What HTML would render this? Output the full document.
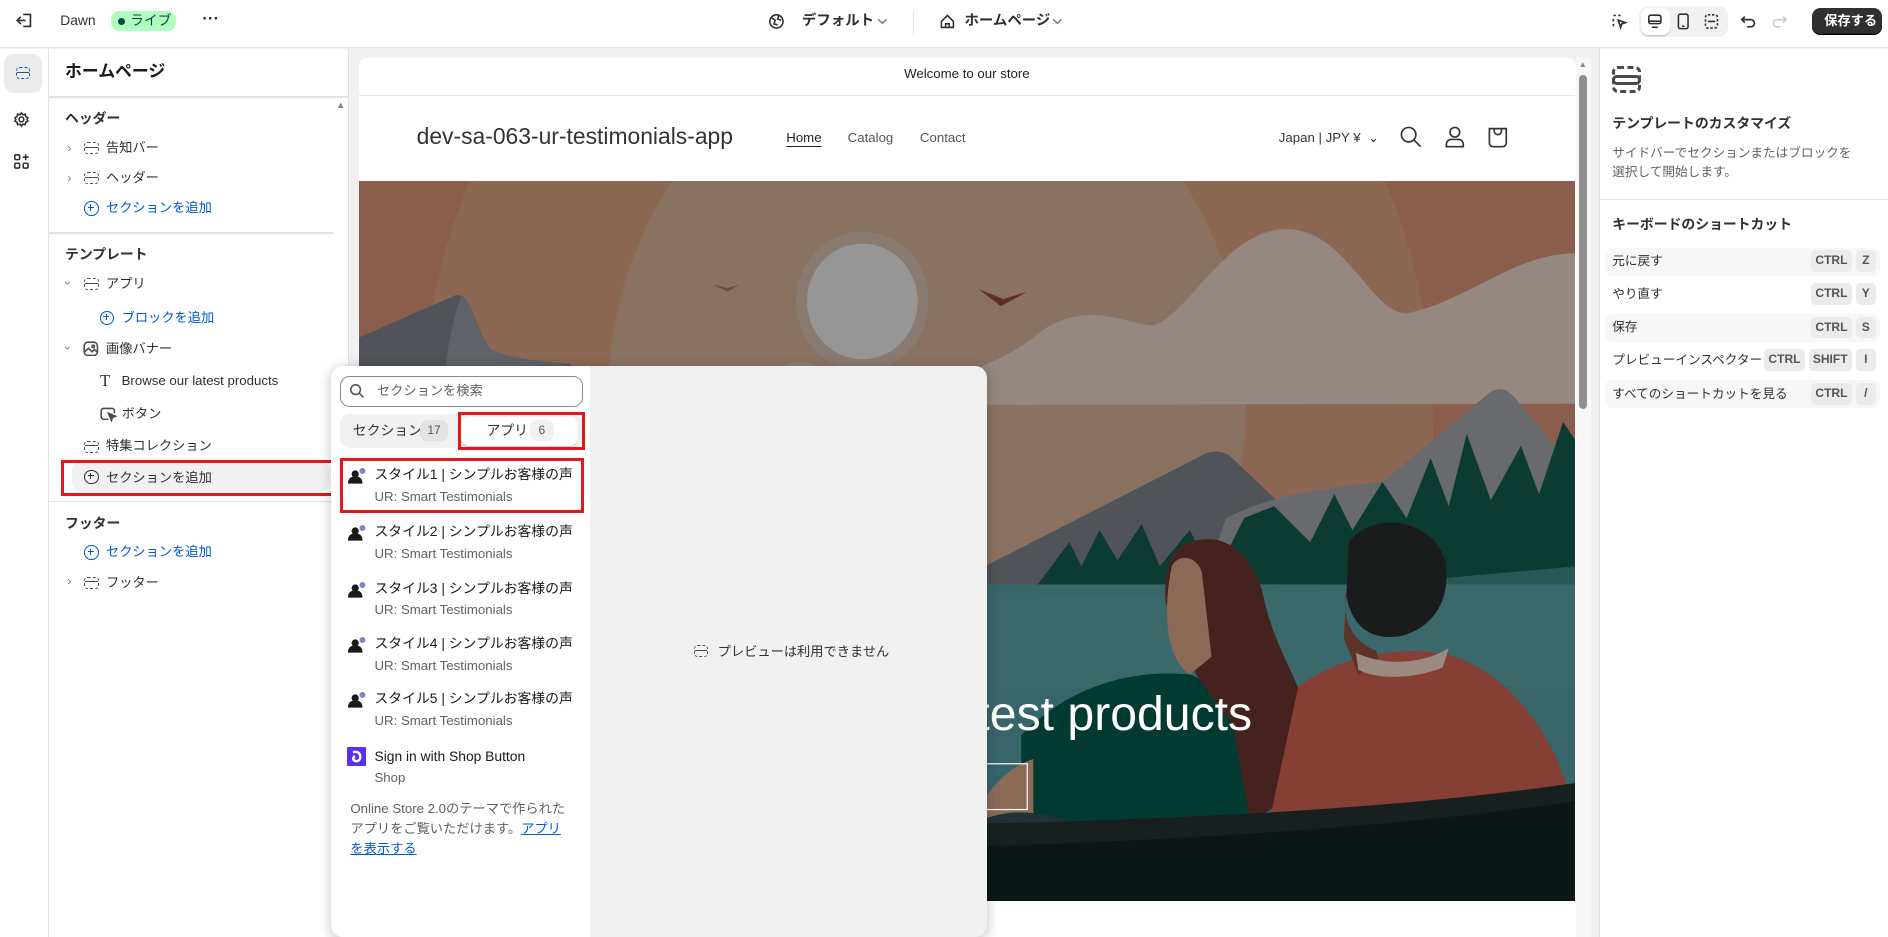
<!DOCTYPE html>
<html><head><meta charset="utf-8">
<style>
*{box-sizing:border-box;margin:0;padding:0}
html,body{width:1888px;height:937px;overflow:hidden;background:#fff}
#w{position:absolute;left:0;top:0;width:1568px;height:778px;zoom:1.2041;font-family:"Liberation Sans","Noto Sans CJK JP",sans-serif;color:#303030;font-size:11px;overflow:hidden;background:#f1f1f1}
.a{position:absolute}
.t{position:absolute;white-space:nowrap;line-height:1}
.blue{color:#005bd3}
.ico{position:absolute;width:12px;height:10px;border:1.5px dashed #4a4a4a;border-radius:3px}
.ico:after{content:"";position:absolute;left:0;right:0;top:3px;border-top:1.5px solid #4a4a4a}
.chev{position:absolute;font-size:10px;color:#777}
.plus{position:absolute;width:12px;height:12px;border:1.5px solid #005bd3;border-radius:50%}
.plus:before{content:"";position:absolute;left:2px;top:4px;width:5px;border-top:1.5px solid #005bd3}
.plus:after{content:"";position:absolute;left:4px;top:2px;height:5px;border-left:1.5px solid #005bd3}
.plus.d{border-color:#303030}.plus.d:before{border-color:#303030}.plus.d:after{border-color:#303030}
.key{position:absolute;background:#ebebeb;border-radius:4px;height:18px;font-size:10px;font-weight:bold;color:#555;text-align:center;line-height:18px}
.row{position:absolute;left:1333px;width:228px;height:23px;border-radius:6px}
</style></head><body><div id="w">

<!-- top bar -->
<div class="a" style="left:0;top:0;width:1568px;height:40px;background:#fff;border-bottom:1px solid #e3e3e3"></div>
<svg class="a" style="left:13px;top:10px" width="14" height="14" viewBox="0 0 14 14" fill="none" stroke="#303030" stroke-width="1.4"><path d="M6 2h6v10H6M1 7h7M4 4L1 7l3 3"/></svg>
<div class="t" style="left:50px;top:12px;font-size:11.5px">Dawn</div>
<div class="a" style="left:92px;top:9px;width:54px;height:17px;background:#affebf;border-radius:7px"></div>
<div class="a" style="left:98px;top:15px;width:6px;height:6px;background:#014b40;border-radius:50%"></div>
<div class="t" style="left:108px;top:12px;font-size:11.5px;color:#014b40">ライブ</div>
<div class="t" style="left:168px;top:9px;font-size:14px;font-weight:bold">···</div>
<svg class="a" style="left:638px;top:11px" width="14" height="14" viewBox="0 0 14 14" fill="none" stroke="#303030" stroke-width="1.3"><circle cx="7" cy="7" r="5.5"/><path d="M3 4l3 2-1 3 3 1M9 2l-1 3 3 1"/></svg>
<div class="t" style="left:666px;top:12px;font-size:12px;font-weight:bold">デフォルト</div>
<svg class="a" style="left:728px;top:15px" width="9" height="6" viewBox="0 0 9 6" fill="none" stroke="#777" stroke-width="1.2"><path d="M1 1l3.5 3.5L8 1"/></svg>
<div class="a" style="left:758px;top:9px;width:1px;height:20px;background:#e3e3e3"></div>
<svg class="a" style="left:780px;top:11px" width="14" height="14" viewBox="0 0 14 14" fill="none" stroke="#303030" stroke-width="1.3"><path d="M2 7l5-5 5 5v5H2zM5.5 12V9h3v3"/></svg>
<div class="t" style="left:801px;top:12px;font-size:12px;font-weight:bold">ホームページ</div>
<svg class="a" style="left:874px;top:15px" width="9" height="6" viewBox="0 0 9 6" fill="none" stroke="#777" stroke-width="1.2"><path d="M1 1l3.5 3.5L8 1"/></svg>
<svg class="a" style="left:1338px;top:11px" width="14" height="14" viewBox="0 0 14 14" fill="none" stroke="#303030" stroke-width="1.4"><path d="M2 2h2M6 2h2M2 5v2M2 9v2M6 6l6 2-3 1-1 3z"/></svg>
<div class="a" style="left:1361px;top:5px;width:74px;height:26px;background:#f1f1f1;border-radius:8px"></div>
<div class="a" style="left:1363px;top:7px;width:24px;height:22px;background:#fff;border-radius:6px;box-shadow:0 1px 1px rgba(0,0,0,.15)"></div>
<svg class="a" style="left:1368px;top:12px" width="13" height="12" viewBox="0 0 13 12" fill="none" stroke="#303030" stroke-width="1.3"><rect x="1.5" y="1" width="10" height="7" rx="1.5"/><path d="M4 11h5M1.5 6h10"/></svg>
<svg class="a" style="left:1392px;top:11px" width="12" height="14" viewBox="0 0 12 14" fill="none" stroke="#303030" stroke-width="1.3"><rect x="2" y="1" width="8" height="12" rx="1.5"/><path d="M5 11h2"/></svg>
<svg class="a" style="left:1414px;top:11px" width="14" height="14" viewBox="0 0 14 14" fill="none" stroke="#303030" stroke-width="1.3"><rect x="2" y="1.5" width="10" height="11" rx="2" stroke-dasharray="2 1.5"/><path d="M4 7h6"/></svg>
<svg class="a" style="left:1445px;top:11px" width="14" height="14" viewBox="0 0 14 14" fill="none" stroke="#303030" stroke-width="1.4"><path d="M4 3L1.5 5.5 4 8M1.5 5.5H9a3 3 0 010 6H6"/></svg>
<svg class="a" style="left:1471px;top:11px" width="14" height="14" viewBox="0 0 14 14" fill="none" stroke="#ccc" stroke-width="1.4"><path d="M10 3l2.5 2.5L10 8M12.5 5.5H5a3 3 0 000 6h3"/></svg>
<div class="a" style="left:1505px;top:7px;width:58px;height:22px;background:#303030;border-radius:7px;box-shadow:inset 0 -1px 0 #000"></div>
<div class="t" style="left:1515px;top:12px;font-size:11px;color:#fff;font-weight:bold">保存する</div>

<!-- left strip -->
<div class="a" style="left:0;top:41px;width:41px;height:737px;background:#fff;border-right:1px solid #e3e3e3"></div>
<div class="a" style="left:3px;top:45px;width:32px;height:32px;background:#ebebeb;border-radius:8px"></div>
<div class="ico" style="left:13px;top:56px;border-color:#005bd3"></div>
<svg class="a" style="left:11px;top:92px" width="14" height="14" viewBox="0 0 14 14" fill="none" stroke="#303030" stroke-width="1.3"><circle cx="7" cy="7" r="2"/><path d="M7 1.5l1.2 1.6 2-.5.4 2 1.8 1L11.6 7l.8 1.4-1.8 1-.4 2-2-.5L7 12.5l-1.2-1.6-2 .5-.4-2-1.8-1L2.4 7l-.8-1.4 1.8-1 .4-2 2 .5z"/></svg>
<svg class="a" style="left:11px;top:127px" width="14" height="14" viewBox="0 0 14 14" fill="none" stroke="#303030" stroke-width="1.3"><rect x="1.5" y="1.5" width="4" height="4" rx="1"/><rect x="1.5" y="8.5" width="4" height="4" rx="1"/><rect x="8.5" y="8.5" width="4" height="4" rx="1"/><path d="M10.5 1v5M8 3.5h5"/></svg>

<!-- left panel -->
<div class="a" style="left:41px;top:41px;width:249px;height:737px;background:#fff;border-right:1px solid #e3e3e3"></div>
<div class="t" style="left:54px;top:53px;font-size:14px;font-weight:bold;color:#1a1a1a">ホームページ</div>
<div class="a" style="left:41px;top:80px;width:249px;height:1px;background:#e3e3e3"></div>
<div class="t" style="left:279px;top:84px;font-size:8px;color:#888">▲</div>
<div class="t" style="left:54px;top:93px;font-size:11.5px;font-weight:bold">ヘッダー</div>
<div class="chev" style="left:56px;top:117px">›</div><div class="ico" style="left:70px;top:118px"></div><div class="t" style="left:88px;top:117px;font-size:11px">告知バー</div>
<div class="chev" style="left:56px;top:142px">›</div><div class="ico" style="left:70px;top:143px"></div><div class="t" style="left:88px;top:142px;font-size:11px">ヘッダー</div>
<div class="plus" style="left:70px;top:167px"></div><div class="t blue" style="left:88px;top:167px;font-size:11px">セクションを追加</div>
<div class="a" style="left:41px;top:193px;width:236px;height:1px;background:#e3e3e3"></div>
<div class="t" style="left:54px;top:206px;font-size:11.5px;font-weight:bold">テンプレート</div>
<div class="chev" style="left:55px;top:229px;transform:rotate(90deg)">›</div><div class="ico" style="left:70px;top:231px"></div><div class="t" style="left:88px;top:230px;font-size:11px">アプリ</div>
<div class="plus" style="left:83px;top:258px"></div><div class="t blue" style="left:101px;top:258px;font-size:11px">ブロックを追加</div>
<div class="chev" style="left:55px;top:283px;transform:rotate(90deg)">›</div>
<svg class="a" style="left:69px;top:283px" width="13" height="13" viewBox="0 0 13 13" fill="none" stroke="#4a4a4a" stroke-width="1.3"><rect x="1" y="1" width="11" height="11" rx="3"/><path d="M1.5 9l3-3 3 3 2-2 2 2"/><circle cx="8.5" cy="4.5" r="1"/></svg>
<div class="t" style="left:88px;top:284px;font-size:11px">画像バナー</div>
<div class="t" style="left:83px;top:310px;font-size:14px;font-family:'Liberation Serif',serif">T</div><div class="t" style="left:101px;top:311px;font-size:11px">Browse our latest products</div>
<svg class="a" style="left:83px;top:337px" width="14" height="14" viewBox="0 0 14 14" fill="none" stroke="#4a4a4a" stroke-width="1.3"><path d="M7 11H3a2 2 0 01-2-2V4a2 2 0 012-2h7a2 2 0 012 2v2"/><path d="M7 6l6 2.5-2.5 1-1 2.5z" fill="#4a4a4a"/></svg>
<div class="t" style="left:101px;top:338px;font-size:11px">ボタン</div>
<div class="ico" style="left:70px;top:366px"></div><div class="t" style="left:88px;top:365px;font-size:11px">特集コレクション</div>
<div class="a" style="left:60px;top:383px;width:213px;height:26px;background:#f1f1f1;border-radius:8px"></div>
<div class="a" style="left:51px;top:382px;width:226px;height:30px;border:2.5px solid #e8161a"></div>
<div class="plus d" style="left:70px;top:390px"></div><div class="t" style="left:88px;top:391px;font-size:11px">セクションを追加</div>
<div class="a" style="left:41px;top:416px;width:236px;height:1px;background:#e3e3e3"></div>
<div class="t" style="left:54px;top:429px;font-size:11.5px;font-weight:bold">フッター</div>
<div class="plus" style="left:70px;top:453px"></div><div class="t blue" style="left:88px;top:453px;font-size:11px">セクションを追加</div>
<div class="chev" style="left:56px;top:477px">›</div><div class="ico" style="left:70px;top:479px"></div><div class="t" style="left:88px;top:478px;font-size:11px">フッター</div>

<!-- preview frame -->
<div class="a" style="left:298px;top:48px;width:1011px;height:730px;background:#fff;border-radius:6px 6px 0 0"></div>
<div class="t" style="top:56px;text-align:center;font-size:11px;color:#222;left:298px;width:1010px">Welcome to our store</div>
<div class="a" style="left:298px;top:79px;width:1010px;height:1px;background:#e6e6e6"></div>
<div class="t" style="left:346px;top:104px;font-size:19px;color:#333">dev-sa-063-ur-testimonials-app</div>
<div class="t" style="left:653px;top:109px;font-size:11px;color:#222;text-decoration:underline;text-underline-offset:3px">Home</div>
<div class="t" style="left:704px;top:109px;font-size:11px;color:#555">Catalog</div>
<div class="t" style="left:764px;top:109px;font-size:11px;color:#555">Contact</div>
<div class="t" style="left:1062px;top:109px;font-size:11px;color:#333">Japan | JPY ¥ &nbsp;⌄</div>
<svg class="a" style="left:1162px;top:104px" width="20" height="20" viewBox="0 0 20 20" fill="none" stroke="#333" stroke-width="1.4"><circle cx="8" cy="8" r="6"/><path d="M12.5 12.5L18 18"/></svg>
<svg class="a" style="left:1199px;top:104px" width="18" height="20" viewBox="0 0 18 20" fill="none" stroke="#333" stroke-width="1.4"><circle cx="9" cy="6" r="4"/><path d="M2 18v-2a4 4 0 014-4h6a4 4 0 014 4v2z"/></svg>
<svg class="a" style="left:1235px;top:104px" width="18" height="20" viewBox="0 0 18 20" fill="none" stroke="#333" stroke-width="1.4"><path d="M2 3h14v12a3 3 0 01-3 3H5a3 3 0 01-3-3zM6 3v2a3 3 0 006 0V3"/></svg>

<!-- hero -->
<svg class="a" style="left:298px;top:150px" width="1010" height="598" viewBox="0 0 1010 598">
<rect width="1010" height="598" fill="#8b5d4c"/>
<ellipse cx="472" cy="200" rx="420" ry="470" fill="#8c6754"/>
<ellipse cx="472" cy="180" rx="265" ry="300" fill="#8a7262"/>
<ellipse cx="418" cy="100" rx="55" ry="58" fill="#8a7b70"/>
<ellipse cx="418" cy="100" rx="46" ry="48" fill="#969696"/>
<path d="M294 86l12 6 10-6-10 3z" fill="#6e4a40"/>
<path d="M515 90l18 14 22-12-20 6z" fill="#5e2e2a"/>
<path d="M550 135l10 5 12-5-11 2z" fill="#6e4a40"/>
<path d="M410 180 C470 170 520 160 560 130 C600 95 640 120 660 120 C690 110 720 40 770 40 C820 40 840 110 870 110 C920 100 960 60 1010 60 L1010 185 L410 186 Z" fill="#958880"/>
<path d="M330 185 C340 150 370 140 390 160 L400 186Z" fill="#8f8078"/>
<path d="M0 130 L80 95 C88 92 90 110 95 125 C110 150 140 150 175 152 L220 200 L0 210 Z" fill="#505357"/>
<path d="M85 95 C95 100 100 130 110 140 C130 150 160 148 180 155 L200 200 L70 210 C68 170 75 120 85 95Z" fill="#5f6266"/>
<path d="M500 330 L700 228 C710 222 720 225 725 230 L820 320 L500 340Z" fill="#505357"/>
<path d="M720 280 C760 260 800 255 850 250 L940 175 C950 170 955 175 960 180 L1010 240 L1010 340 L700 340Z" fill="#686a6e"/>
<path d="M560 340 L590 300 L600 320 L615 290 L630 315 L650 285 L665 320 L690 290 L710 330 L735 280 L760 270 L790 300 L810 260 L825 290 L850 250 L870 280 L890 230 L905 270 L920 210 L940 265 L965 220 L980 260 L1000 200 L1010 215 L1010 340 Z" fill="#0c3b31"/>
<rect x="0" y="335" width="1010" height="200" fill="#38656a"/>
<path d="M0 360 C200 350 400 355 600 345 C800 340 900 330 1010 320 L1010 420 L0 420Z" fill="#3c6a6c" opacity=".6"/>
<path d="M550 460 C590 420 640 405 690 410 C720 420 750 460 760 500 L740 560 L550 560Z" fill="#003a30"/>
<path d="M690 300 C720 290 740 310 750 340 C760 390 780 410 790 450 C800 490 770 520 740 530 L725 450 C700 420 680 390 670 350 C668 320 675 305 690 300Z" fill="#46221f"/>
<path d="M675 320 C680 310 695 310 700 325 L708 395 L690 410 C675 400 665 370 675 320Z" fill="#8b6a58"/>
<path d="M560 480 C530 490 510 520 500 560 L560 560Z" fill="#8b6a58"/>
<path d="M780 420 C820 390 880 385 910 395 C950 410 975 440 995 480 L1010 520 L1010 560 L750 560 Z" fill="#853f35"/>
<path d="M822 300 C840 275 890 278 902 315 C908 350 890 372 865 378 C840 382 825 370 820 345Z" fill="#1a1c1c"/>
<path d="M820 340 C815 370 830 385 845 390 L848 402 L830 410 L818 380Z" fill="#5c3428"/>
<path d="M828 392 C855 404 885 400 905 388 L900 404 C875 414 845 414 830 406Z" fill="#9a8a80"/>
<path d="M500 540 C530 520 560 520 600 535 L600 560 L480 560Z" fill="#1f3236"/>
<path d="M0 560 C300 540 700 555 1010 505 L1010 598 L0 598Z" fill="#0d1715"/>
<path d="M0 548 C300 530 700 545 1010 500 L1010 515 C700 560 300 555 0 565Z" fill="#17201f"/>
<text x="505" y="456" text-anchor="middle" font-family="Liberation Sans,sans-serif" font-size="40" fill="#fff">Browse our latest products</text>
<rect x="385" y="484" width="170" height="38" fill="none" stroke="#fff" stroke-width="1"/>
<text x="470" y="508" text-anchor="middle" font-family="Liberation Sans,sans-serif" font-size="12" fill="#fff">Shop all</text>
</svg>
<!-- scrollbar -->
<div class="a" style="left:1309px;top:48px;width:12px;height:730px;background:#f7f7f7"></div>
<div class="a" style="left:1311px;top:62px;width:7px;height:278px;background:#909090;border-radius:4px"></div>
<div class="t" style="left:1311px;top:50px;font-size:7px;color:#888">▲</div>

<!-- right panel -->
<div class="a" style="left:1328px;top:41px;width:240px;height:737px;background:#fff;border-left:1px solid #e3e3e3"></div>
<div class="a" style="left:1339px;top:55px;width:24px;height:22px;border:3px dashed #4a4a4a;border-radius:5px"></div>
<div class="a" style="left:1339px;top:62px;width:24px;height:9px;border:3px solid #4a4a4a;border-radius:4px"></div>
<div class="t" style="left:1339px;top:97px;font-size:11.5px;font-weight:bold">テンプレートのカスタマイズ</div>
<div class="t" style="left:1339px;top:122px;font-size:10.5px;color:#616161">サイドバーでセクションまたはブロックを</div>
<div class="t" style="left:1339px;top:138px;font-size:10.5px;color:#616161">選択して開始します。</div>
<div class="a" style="left:1329px;top:165px;width:239px;height:1px;background:#e3e3e3"></div>
<div class="t" style="left:1339px;top:181px;font-size:11.5px;font-weight:bold">キーボードのショートカット</div>
<div class="row" style="top:206px;background:#f7f7f7"></div>
<div class="row" style="top:261px;background:#f7f7f7"></div>
<div class="row" style="top:316px;background:#f7f7f7"></div>
<div class="t" style="left:1339px;top:212px;font-size:10.5px">元に戻す</div>
<div class="key" style="left:1504px;top:208px;width:34px">CTRL</div><div class="key" style="left:1541px;top:208px;width:17px">Z</div>
<div class="t" style="left:1339px;top:239px;font-size:10.5px">やり直す</div>
<div class="key" style="left:1504px;top:235px;width:34px">CTRL</div><div class="key" style="left:1541px;top:235px;width:17px">Y</div>
<div class="t" style="left:1339px;top:267px;font-size:10.5px">保存</div>
<div class="key" style="left:1504px;top:263px;width:34px">CTRL</div><div class="key" style="left:1541px;top:263px;width:17px">S</div>
<div class="t" style="left:1339px;top:294px;font-size:10.5px">プレビューインスペクター</div>
<div class="key" style="left:1465px;top:290px;width:34px">CTRL</div><div class="key" style="left:1502px;top:290px;width:36px">SHIFT</div><div class="key" style="left:1541px;top:290px;width:17px">I</div>
<div class="t" style="left:1339px;top:322px;font-size:10.5px">すべてのショートカットを見る</div>
<div class="key" style="left:1504px;top:318px;width:34px">CTRL</div><div class="key" style="left:1541px;top:318px;width:17px">/</div>

<!-- popup -->
<div class="a" style="left:275px;top:304px;width:545px;height:474px;background:#f1f1f1;border-radius:10px;box-shadow:0 2px 10px rgba(0,0,0,.25);overflow:hidden">
  <div class="a" style="left:0;top:0;width:215px;height:474px;background:#fff"></div>
</div>
<div class="a" style="left:282px;top:312px;width:202px;height:26px;border:1px solid #8a8a8a;border-radius:8px;background:#fff"></div>
<svg class="a" style="left:290px;top:318px" width="13" height="13" viewBox="0 0 13 13" fill="none" stroke="#555" stroke-width="1.3"><circle cx="5.5" cy="5.5" r="4"/><path d="M8.5 8.5L12 12"/></svg>
<div class="t" style="left:313px;top:319px;font-size:11px;color:#616161">セクションを検索</div>
<div class="a" style="left:282px;top:344px;width:202px;height:28px;background:#f1f1f1;border-radius:8px"></div>
<div class="t" style="left:293px;top:352px;font-size:11.5px">セクション</div>
<div class="a" style="left:349px;top:349px;width:23px;height:17px;background:#e3e3e3;border-radius:6px;font-size:10px;text-align:center;line-height:17px;color:#555">17</div>
<div class="a" style="left:383px;top:346px;width:97px;height:24px;background:#fff;border-radius:7px;box-shadow:0 1px 1px rgba(0,0,0,.15)"></div>
<div class="t" style="left:404px;top:352px;font-size:11.5px">アプリ</div>
<div class="a" style="left:440px;top:349px;width:20px;height:17px;background:#f1f1f1;border-radius:6px;font-size:10px;text-align:center;line-height:17px;color:#555">6</div>
<div class="a" style="left:380px;top:342px;width:106px;height:32px;border:2.5px solid #e8161a"></div>

<div class="a" style="left:282px;top:380px;width:203px;height:46px;border:2.5px solid #e8161a"></div>
<div class="t" style="left:311px;top:389px;font-size:11.5px;color:#1a1a1a">スタイル1 | シンプルお客様の声</div>
<div class="t" style="left:311px;top:407px;font-size:11px;color:#616161">UR: Smart Testimonials</div>
<div class="t" style="left:311px;top:436px;font-size:11.5px;color:#1a1a1a">スタイル2 | シンプルお客様の声</div>
<div class="t" style="left:311px;top:454px;font-size:11px;color:#616161">UR: Smart Testimonials</div>
<div class="t" style="left:311px;top:483px;font-size:11.5px;color:#1a1a1a">スタイル3 | シンプルお客様の声</div>
<div class="t" style="left:311px;top:501px;font-size:11px;color:#616161">UR: Smart Testimonials</div>
<div class="t" style="left:311px;top:529px;font-size:11.5px;color:#1a1a1a">スタイル4 | シンプルお客様の声</div>
<div class="t" style="left:311px;top:547px;font-size:11px;color:#616161">UR: Smart Testimonials</div>
<div class="t" style="left:311px;top:575px;font-size:11.5px;color:#1a1a1a">スタイル5 | シンプルお客様の声</div>
<div class="t" style="left:311px;top:593px;font-size:11px;color:#616161">UR: Smart Testimonials</div>
<svg class="a" style="left:289px;top:389px" width="15" height="14" viewBox="0 0 15 14"><circle cx="6" cy="5" r="3" fill="#1a1a1a"/><path d="M0 13c0-4 2-6 6-6s6 2 6 6z" fill="#1a1a1a"/><circle cx="12" cy="2.5" r="2.5" fill="#7a86d0"/></svg>
<svg class="a" style="left:289px;top:436px" width="15" height="14" viewBox="0 0 15 14"><circle cx="6" cy="5" r="3" fill="#1a1a1a"/><path d="M0 13c0-4 2-6 6-6s6 2 6 6z" fill="#1a1a1a"/><circle cx="12" cy="2.5" r="2.5" fill="#7a86d0"/></svg>
<svg class="a" style="left:289px;top:483px" width="15" height="14" viewBox="0 0 15 14"><circle cx="6" cy="5" r="3" fill="#1a1a1a"/><path d="M0 13c0-4 2-6 6-6s6 2 6 6z" fill="#1a1a1a"/><circle cx="12" cy="2.5" r="2.5" fill="#7a86d0"/></svg>
<svg class="a" style="left:289px;top:529px" width="15" height="14" viewBox="0 0 15 14"><circle cx="6" cy="5" r="3" fill="#1a1a1a"/><path d="M0 13c0-4 2-6 6-6s6 2 6 6z" fill="#1a1a1a"/><circle cx="12" cy="2.5" r="2.5" fill="#7a86d0"/></svg>
<svg class="a" style="left:289px;top:575px" width="15" height="14" viewBox="0 0 15 14"><circle cx="6" cy="5" r="3" fill="#1a1a1a"/><path d="M0 13c0-4 2-6 6-6s6 2 6 6z" fill="#1a1a1a"/><circle cx="12" cy="2.5" r="2.5" fill="#7a86d0"/></svg>
<svg class="a" style="left:288px;top:620px" width="16" height="16" viewBox="0 0 16 16"><rect width="16" height="16" rx="1" fill="#5a31f4"/><path d="M5 4.5c2-1 6-.5 6 3.5s-3 4-4.5 3.5S4.5 9 6.5 7.5" fill="none" stroke="#fff" stroke-width="2"/></svg>
<div class="t" style="left:311px;top:623px;font-size:11.5px;color:#1a1a1a">Sign in with Shop Button</div>
<div class="t" style="left:311px;top:640px;font-size:11px;color:#616161">Shop</div>
<div class="t" style="left:291px;top:666px;font-size:11px;color:#616161">Online Store 2.0のテーマで作られた</div>
<div class="t" style="left:291px;top:683px;font-size:11px;color:#616161">アプリをご覧いただけます。<span class="blue" style="text-decoration:underline">アプリ</span></div>
<div class="t blue" style="left:291px;top:699px;font-size:11px;text-decoration:underline">を表示する</div>
<div class="ico" style="left:576px;top:536px;border-color:#555"></div>
<div class="t" style="left:596px;top:536px;font-size:11px;color:#303030">プレビューは利用できません</div>

</div></body></html>
